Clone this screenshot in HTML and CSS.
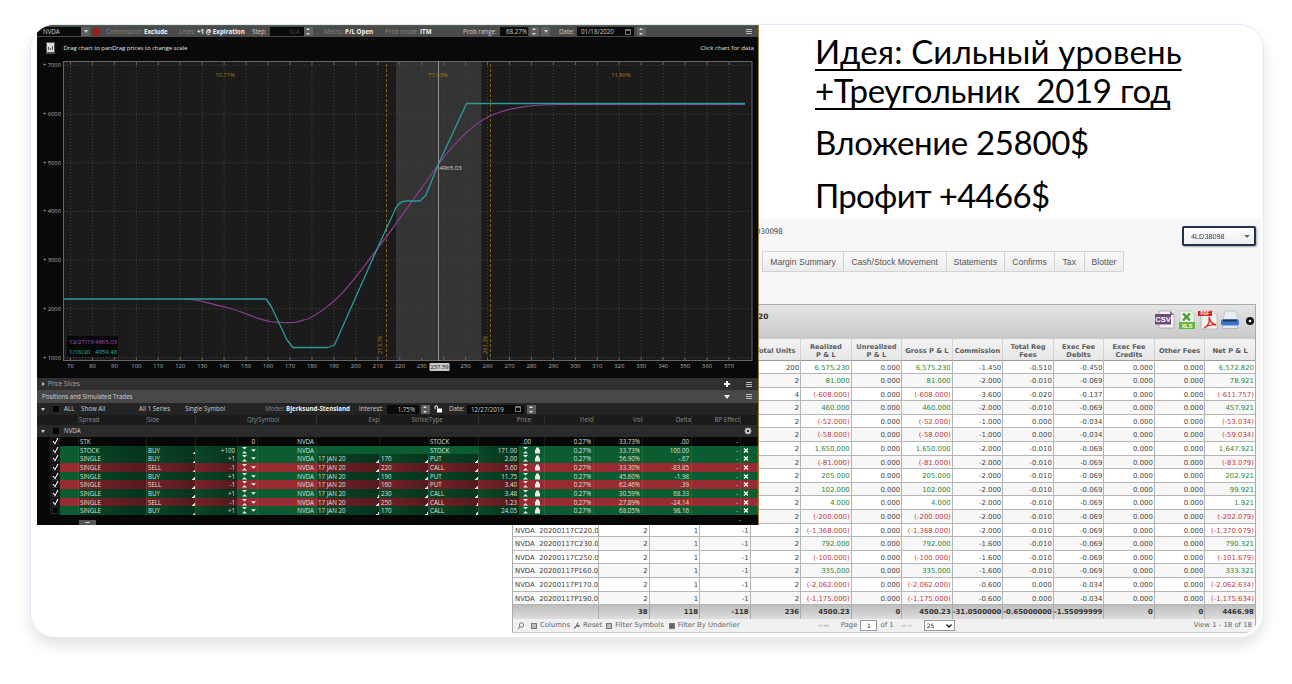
FILE: index.html
```html
<!DOCTYPE html>
<html lang="ru">
<head>
<meta charset="utf-8">
<title>NVDA 2019</title>
<link rel="stylesheet" href="styles.css">
</head>
<body>
<main class="card">
  <header class="idea">
    <p class="idea-line under first">Идея: Сильный уровень</p>
    <p class="idea-line under second">+Треугольник&nbsp; 2019 год</p>
    <p class="idea-line invest">Вложение 25800$</p>
    <p class="idea-line profit">Профит +4466$</p>
  </header>

  <section class="broker">
    <div class="account">
      <span class="account-id">030098</span>
      <span class="account-select"><span class="masked">4LD38098</span><i class="caret"></i></span>
    </div>
    <nav class="tabs">
      <span>Margin Summary</span><span>Cash/Stock Movement</span><span>Statements</span><span>Confirms</span><span>Tax</span><span>Blotter</span>
    </nav>
    <div class="report">
      <div class="report-title">
        <b>20</b>
        <svg class="exports" width="104" height="24" viewBox="0 0 104 24">
          <path d="M5 2h11l4 4v13H5z" fill="#f4f4f4" stroke="#999" stroke-width=".7"/>
          <path d="M16 2v4h4z" fill="#777"/>
          <rect x="1" y="5" width="16" height="10.500" fill="#6d4c7d"/>
          <text x="9" y="12.900" class="ico-text" font-size="7.500">CSV</text>
          <path d="M26 2h11l3 3v15H26z" fill="#eef3ea" stroke="#b9c4b4" stroke-width=".7"/>
          <path d="M29 4.500l7 7M36 4.500l-7 7" stroke="#4c9a35" stroke-width="2.400"/>
          <rect x="25" y="13" width="16" height="7" fill="#68b543"/>
          <text x="33" y="18.800" class="ico-text" font-size="5.500">XLS</text>
          <path d="M47 2h12l4 4v14H47z" fill="#f6f2f1" stroke="#aaa" stroke-width=".7"/>
          <rect x="44" y="2" width="14" height="5" fill="#cf2420"/>
          <text x="51" y="6" class="ico-text" font-size="4.500">PDF</text>
          <path d="M50 19c4-2 6-6 5-11 1 4 3 7 7 8-4-1-8 0-12 3" fill="none" stroke="#d32d27" stroke-width="1.400"/>
          <path d="M71 2h11l2 9H69z" fill="#e9eef4" stroke="#aab4c2" stroke-width=".7"/>
          <rect x="67" y="10.500" width="18" height="6" rx="2" fill="#3b74cb"/>
          <rect x="69" y="10.500" width="14" height="2" fill="#173866"/>
          <path d="M69 16.500h14l1 3H68z" fill="#dfe8f4" stroke="#8ba2c4" stroke-width=".6"/>
          <circle cx="96" cy="12" r="4" fill="#161616"/><circle cx="96" cy="12" r="1.300" fill="#fff"/>
        </svg>
      </div>
      <div class="grid head" id="head"></div>
      <div id="rows"></div>
      <div class="grid total" id="total"></div>
      <div class="pager">
        <svg width="8" height="8" viewBox="0 0 8 8"><circle cx="4.500" cy="3" r="2.200" fill="none" stroke="#666" stroke-width=".8"/><path d="M3 4.600L1 7" stroke="#666"/></svg>
        <span class="tool columns"><i class="sheet"></i>Columns</span>
        <span class="tool reset"><svg width="6" height="7" viewBox="0 0 6 7"><path d="M0 6.500L3 3.500M2.500 2.500l2 2 1.200-1.500M3 2.500L4 .8" stroke="#666" fill="none" stroke-width="1.200"/></svg>Reset</span>
        <span class="tool symbols"><i class="sheet"></i>Filter Symbols</span>
        <span class="tool underlier"><i class="sheet dark"></i>Filter By Underlier</span>
        <span class="nav first">ı◂ ◂◂</span><span class="page">Page</span><span class="box">1</span><span class="of">of 1</span><span class="nav">▸▸ ▸ı</span>
        <span class="box size">25<svg width="6" height="4" viewBox="0 0 6 4"><path d="M.5 .5L3 3 5.500 .5" fill="none" stroke="#111" stroke-width="1.300"/></svg></span>
        <span class="view">View 1 - 18 of 18</span>
      </div>
    </div>
  </section>

  <section class="platform">
    <div class="toolbar">
      <span class="field">NVDA</span><span class="btn"><i class="down"></i></span><span class="red"></span>
      <span class="dim c">Commission:</span><b>Exclude</b><span class="dim">Lines:</span><b>+1 @ Expiration</b><span>Step:</span>
      <span class="field na">N/A</span><span class="btn spin"></span><span class="dim m">Metric:</span><b>P/L Open</b><span class="dim">Prob mode:</span><b>ITM</b>
      <span>Prob range:</span><span class="field pct">68.27%</span><span class="btn spin"></span><span class="btn"><i class="down"></i></span>
      <span class="d">Date:</span><span class="field date">01/18/2020 <i class="cal"></i></span><span class="btn spin"></span><span class="list"></span>
    </div>
    <svg class="chart" width="722" height="340" viewBox="37 37 722 340" id="chart"></svg>
    <div class="bar slices"><span><i class="right"></i>Price Slices</span><span class="bar-tools"><b class="plus"></b><i class="list"></i></span></div>
    <div class="bar positions"><span>Positions and Simulated Trades</span><span class="bar-tools"><i class="down big"></i><i class="list"></i></span></div>
    <div class="filters">
      <i class="down"></i><i class="check"></i><span>ALL</span><span>Show All</span><span>All 1 Series</span><span>Single Symbol</span>
      <span class="dim">Model:</span><b>Bjerksund-Stensland</b><span>Interest:</span><span class="field pct">1.75%</span><span class="btn spin"></span>
      <svg width="9" height="8" viewBox="0 0 9 8"><path d="M1 4V2a1.300 1.300 0 0 1 2.600 0v1.500" fill="none" stroke="#fff"/><rect x="3" y="3.500" width="5" height="4" fill="#fff"/></svg>
      <span>Date:</span><span class="field date">12/27/2019 <i class="cal"></i></span><span class="btn spin"></span>
    </div>
    <div class="legs-head"><span></span><span>Spread</span><span>Side</span><span class="r">Qty</span><span>Symbol</span><span class="r">Exp</span><span class="r">Strike</span><span>Type</span><span class="r">Price</span><span></span><span class="r">Yield</span><span class="r">Vol</span><span class="r">Delta</span><span class="r">BP Effect</span><span></span></div>
    <div class="group"><i class="down"></i><i class="check"></i><span>NVDA</span>
      <svg width="8" height="8" viewBox="0 0 8 8"><circle cx="4" cy="4" r="2" fill="none" stroke="#ddd" stroke-width="1.400"/><path d="M4 .5v1.200M4 6.300v1.200M.5 4h1.200M6.300 4h1.200M1.500 1.500l.9.900M5.600 5.600l.9.900M6.500 1.500l-.9.900M2.400 5.600l-.9.900" stroke="#ddd" stroke-width="1.100"/></svg>
    </div>
    <div id="legs"></div>
    <div class="tail"><span class="grip"></span><span class="dash">-</span></div>
  </section>
</main>
<script src="app.js"></script>
</body>
</html>
```

FILE: styles.css
```css
* { box-sizing: border-box; }
body { margin: 0; height: 684px; padding: 25px 31px 0; background: #fff; overflow: hidden; }
p { margin: 0; }
.card { position: relative; width: 1230px; height: 610px; border-radius: 24px; overflow: hidden; background: #fff; }
body::before { content: ""; position: absolute; left: 30px; top: 24px; width: 1232px; height: 612px; border-radius: 25px; border: 1px solid #dfeaf6; box-shadow: 0 8px 14px rgba(0,0,0,.11); }

.idea { height: 193px; padding: 6px 0 0 784px; font-family: Lato, "Open Sans", sans-serif; font-size: 33px; color: #000; }
.idea-line { height: 39px; line-height: 40px; white-space: nowrap; }
.under { width: max-content; text-decoration: underline; text-decoration-thickness: 2px; text-underline-offset: 5px; text-decoration-skip-ink: none; }
.first { letter-spacing: .15px; }
.second { letter-spacing: -.28px; }
.invest { margin-top: 13px; letter-spacing: -.35px; }
.profit { margin-top: 14px; letter-spacing: -.7px; }

.broker { margin-left: 475px; height: 417px; padding: 7px 5px 0 6px; background: linear-gradient(90deg, #fff 6px, #f7f7f7 6px); }
.account { display: flex; justify-content: space-between; height: 26px; padding-left: 244px; }
.account-id { font: 7.800px/14px "DejaVu Sans Condensed", "DejaVu Sans", sans-serif; color: #1b3a5c; }
.account-select { display: flex; align-items: center; justify-content: space-between; width: 74px; height: 20px; margin-top: 1px; padding: 0 4px 0 7px; border: 2px solid #22324a; border-radius: 2px; background: linear-gradient(#fff, #eee); box-shadow: 1px 1px 2px #aaa; font: 7.300px "Liberation Sans", sans-serif; color: #344252; }
.masked { filter: blur(.7px); }
.caret { border: 3px solid transparent; border-top-color: #667; border-bottom: 0; }
.tabs { display: grid; grid-template-columns: 81px 102.500px 58.500px 50px 29.500px 40px; width: 362px; height: 21px; margin-left: 250px; border: 1px solid #d2d2d2; border-left: 0; border-radius: 0 2px 2px 0; background: linear-gradient(#fafafa, #ececec); font: 8.600px/20px "Liberation Sans", sans-serif; color: #555; text-align: center; }
.tabs span { border-left: 1px solid #d2d2d2; white-space: nowrap; }
.report { width: 744px; margin-top: 32px; border: 1px solid #aaa; border-bottom-color: #ccc; font: 6.900px/15px "DejaVu Sans", Verdana, sans-serif; color: #444; }
.report-title { display: flex; justify-content: space-between; height: 33.500px; padding: 4px 0 0 245px; background: linear-gradient(#e4e4e4, #c9c9c9); }
.report-title b { font-size: 7.500px; line-height: 16px; color: #333; }
.exports { margin-right: -3px; }
.ico-text { font-family: "Liberation Sans", sans-serif; font-weight: bold; fill: #fff; text-anchor: middle; }
.grid { display: grid; grid-template-columns: 86px repeat(13, 50.540px); height: 13.600px; overflow: hidden; }
.grid span { border-right: 1px solid #b5b5b5; border-bottom: 1px solid #b5b5b5; text-align: right; padding-right: 1px; white-space: pre; overflow: hidden; }
.grid:nth-child(even) { background: #f7f7f7; }
.grid:nth-child(odd) { background: #fff; }
.grid span:first-child { text-align: left; padding-left: 2px; }
.grid.head { height: 22px; background: linear-gradient(#f3f3f3, #e6e6e6); font-weight: bold; font-size: 6.700px; line-height: 8px; color: #5c5c5c; }
.grid.head span { display: flex; align-items: center; justify-content: center; padding: 4px 0 0; text-align: center; white-space: pre; border-right-color: #d2d2d2; border-bottom-color: #999; }
.grid.total { height: 14px; background: linear-gradient(#bdbdbd, #dedede); font-weight: bold; color: #333; }
.grid.total span { border-color: #aaa; overflow: visible; }
.grid .pos { color: #2b8a35; }
.grid .neg { color: #c23a42; }
.pager { display: flex; align-items: center; height: 13px; padding: 0 3px 0 4px; background: #f0f0f0; color: #666; white-space: nowrap; }
.tool { display: flex; align-items: center; gap: 3px; margin-left: 5px; }
.columns { margin-left: 6px; }
.reset { margin-left: 4px; }
.symbols { margin-left: 4px; }
.sheet { width: 6px; height: 6px; border: 1px solid #777; background: #bbb; }
.sheet.dark { background: #666; }
.nav { color: #bbb; font-size: 5px; width: 22px; margin-left: 8px; }
.nav.first { margin-left: 78px; width: 23px; letter-spacing: 0; }
.box { margin: 0 3px 0 3px; width: 17px; height: 11px; line-height: 10px; text-align: center; font-size: 6px; color: #222; background: #fff; border: 1px solid #999; }
.box.size { display: flex; justify-content: space-between; align-items: center; width: 31px; margin-left: 0; padding: 0 2px; }
.view { margin-left: auto; }

.platform { position: absolute; left: 6px; top: 0; width: 722px; height: 500px; background: #070707; border-right: 1px solid #a07a3a; font: 6.200px/12px "Open Sans", "Noto Sans", sans-serif; color: #cfcfcf; white-space: nowrap; overflow: hidden; }
.platform b { color: #f2f2f2; }
.dim { color: #858585; }
.toolbar { display: flex; align-items: center; height: 12px; background: #4a4a4a; border-top: 1px solid #53614c; line-height: 11px; }
.toolbar > * { flex: none; }
.field { height: 9px; line-height: 9px; background: #0a0a0a; }
.toolbar .field:first-child { width: 44px; padding-left: 6px; }
.btn { display: flex; align-items: center; justify-content: center; width: 9px; height: 9px; background: #606060; }
.spin { position: relative; }
.spin::before, .spin::after { content: ""; position: absolute; left: 2px; border: 2.500px solid transparent; }
.spin::before { top: 1px; border-top: 0; border-bottom: 2.500px solid #ddd; }
.spin::after { bottom: 1px; border-bottom: 0; border-top: 2.500px solid #ddd; }
.down { display: block; width: 0; height: 0; border: 2.500px solid transparent; border-top: 3px solid #ccc; border-bottom: 0; }
.down.big { border-width: 4px 3px 0; border-top-color: #eee; }
.right { display: inline-block; margin-right: 3px; border: 2.500px solid transparent; border-left: 3px solid #bbb; border-right: 0; }
.red { width: 6px; height: 8px; margin-left: 3px; background: #9c1c1c; }
.toolbar .c { width: 38px; margin-left: 7px; }
.toolbar b:nth-of-type(1) { width: 35px; }
.toolbar b:nth-of-type(1) + .dim { width: 18px; }
.toolbar b:nth-of-type(2) { width: 55px; }
.toolbar b:nth-of-type(2) + span { width: 18px; }
.na { width: 34px; padding-right: 4px; text-align: right; color: #444; }
.toolbar .m { width: 21px; margin-left: 11px; }
.toolbar b:nth-of-type(3) { width: 40px; }
.toolbar b:nth-of-type(3) + .dim { width: 35px; }
.toolbar b:nth-of-type(4) { width: 43px; }
.toolbar b:nth-of-type(4) + span { width: 37px; }
.toolbar .pct { width: 28px; margin-right: 2px; padding-left: 6px; }
.toolbar .btn + .btn { margin-left: 2px; }
.toolbar .d { width: 18px; margin-left: 9px; }
.date { width: 57px; padding: 0 3px 0 4px; display: flex; justify-content: space-between; align-items: center; margin-right: 3px; }
.cal { width: 6px; height: 6px; border: 1px solid #777; border-top-width: 2px; }
.list { display: block; width: 6px; height: 5px; background: repeating-linear-gradient(#bbb 0 1px, transparent 1px 2px); }
.toolbar .list { margin-left: auto; margin-right: 6px; }
.chart { display: block; }
.chart text { font: 5.800px "Open Sans", sans-serif; fill: #b0b0b0; }
.chart .hint { font-size: 6.150px; fill: #e0e0e0; }
.chart .prob { fill: #b27c1e; }
.bar { display: flex; align-items: center; justify-content: space-between; height: 12px; margin-top: 1px; padding: 0 6px 0 5px; background: #303030; color: #aaa; }
.bar.positions { margin-top: 0; height: 13px; background: #484848; color: #d0d0d0; }
.bar-tools { display: flex; align-items: center; gap: 16px; }
.bar-tools .down.big { width: 6px; }
.plus { width: 6px; height: 6px; background: linear-gradient(#fff, #fff) 50% 50% / 6px 2px no-repeat, linear-gradient(#fff, #fff) 50% 50% / 2px 6px no-repeat; }
.filters { display: grid; grid-template-columns: 12px 11px 17px 58px 46px 80px 21px 73px 28px 34px 12px 16px 18px 60px 9px; align-items: center; height: 12px; padding-left: 4px; background: #242424; }
.filters svg { margin-left: 1px; }
.filters .pct { text-align: right; padding-right: 4px; margin-right: 2px; }
.filters .date { width: 57px; }
.check { display: block; width: 6px; height: 6px; background: #050505; }
.leg { display: grid; grid-template-columns: 14px 9px 19px 68px 49px 42px 20px 59px 63px 49px 50px 41px 25px 49px 49px 49px 49px 17px; }
.legs-head { display: grid; grid-template-columns: 42px 68px 49px 62px 59px 63px 49px 50px 53px 13px 49px 49px 49px 49px 17px; height: 10px; line-height: 10px; background: #1b1b1b; color: #8b8b8b; }
.legs-head span { border-right: 1px solid #303030; }
.legs-head .r { text-align: right; }
.group { display: grid; grid-template-columns: 12px 11px 680px 10px; align-items: center; height: 12px; padding-left: 4px; background: #2a2a2a; }
.leg { height: 8.670px; line-height: 9px; color: #d8e0da; --b: #0b5c30; --d: linear-gradient(90deg, #084727, #05331c); }
.leg.sell { --b: #982c32; --d: linear-gradient(90deg, #792228, #531a1e); }
.leg.flat { --b: #070707; --d: #070707; }
.leg span { background: var(--b); border-right: 1px solid rgba(255,255,255,.08); padding: 0 2px 0 1px; overflow: hidden; }
.leg .d { background: var(--d); }
.leg .k { background: #070707; padding: 0; }
.leg .r { text-align: right; }
.leg .end { padding: 0; }
.leg .corner { background: linear-gradient(135deg, transparent 50%, #ddd 50%) 100% 100% / 3px 3px no-repeat, var(--d); }
.leg svg { display: block; }
.leg .zero { grid-column: span 2; padding-right: 13px; }
.leg.wide .w { background: var(--b); border-right-color: transparent; }
.tail { display: flex; justify-content: space-between; padding: 5px 17px 0 42px; height: 10px; line-height: 0; }
.grip { width: 17px; height: 5px; background: #ccc; border: 2px solid #555; border-width: 2px 6px; }
```

FILE: app.js
```js
const cells = (list, cls) => list.map((v, i) => `<span class="${cls ? cls(v, i) : ''}">${v}</span>`).join('');

document.getElementById('head').innerHTML = cells(['', '', '', '', 'Total Units', 'Realized\nP & L', 'Unrealized\nP & L', 'Gross P & L', 'Commission', 'Total Reg\nFees', 'Exec Fee\nDebits', 'Exec Fee\nCredits', 'Other Fees', 'Net P & L'].map(t => t.replace('&', '&amp;')));

// symbol | units | realized | commission | reg fees | exec debits | net
const trades = [
  '|200|6,575.230|-1.450|-0.510|-0.450|6,572.820', '|2|81.000|-2.000|-0.010|-0.069|78.921',
  '|4|(-608.000)|-3.600|-0.020|-0.137|(-611.757)', '|2|460.000|-2.000|-0.010|-0.069|457.921',
  '|2|(-52.000)|-1.000|0.000|-0.034|(-53.034)', '|2|(-58.000)|-1.000|0.000|-0.034|(-59.034)',
  '|2|1,650.000|-2.000|-0.010|-0.069|1,647.921', '|2|(-81.000)|-2.000|-0.010|-0.069|(-83.079)',
  '|2|205.000|-2.000|-0.010|-0.069|202.921', '|2|102.000|-2.000|-0.010|-0.069|99.921',
  '|2|4.000|-2.000|-0.010|-0.069|1.921', '|2|(-200.000)|-2.000|-0.010|-0.069|(-202.079)',
  'C220.0|2|(-1,368.000)|-2.000|-0.010|-0.069|(-1,370.079)', 'C230.0|2|792.000|-1.600|-0.010|-0.069|790.321',
  'C250.0|2|(-100.000)|-1.600|-0.010|-0.069|(-101.679)', 'P160.0|2|335.000|-1.600|-0.010|-0.069|333.321',
  'P170.0|2|(-2,062.000)|-0.600|0.000|-0.034|(-2,062.634)', 'P190.0|2|(-1,175.000)|-0.600|0.000|-0.034|(-1,175.634)'
];
document.getElementById('rows').innerHTML = trades.map(t => {
  const [s, u, r, c, f, d, n] = t.split('|');
  const row = [s && 'NVDA  20200117' + s, s && '2', s && '1', s && '-1', u, r, '0.000', r, c, f, d, '0.000', '0.000', n];
  return `<div class="grid">${cells(row, (v, i) => [5, 7, 13].includes(i) ? (v[0] === '(' ? 'neg' : 'pos') : '')}</div>`;
}).join('');
document.getElementById('total').innerHTML = cells(['', '38', '118', '-118', '236', '4500.23', '0', '4500.23', '-31.0500000', '-0.65000000', '-1.55099999', '0', '0', '4466.98']);

// Risk profile chart
let g = '<rect x="37" y="37" width="722" height="340" fill="#090909"/><rect x="63.5" y="61" width="688.5" height="299.500" fill="#1b1b1b"/><rect x="396" y="61" width="85.500" height="299.500" fill="#343434"/>';
for (let p = 70; p <= 370; p += 10) {
  const x = 70.5 + (p - 70) * 2.195;
  g += `<path d="M${x} 61V360" stroke="#424242" stroke-dasharray="1 2"/><path d="M${x} 61v4M${x} 357v4" stroke="#666"/>`;
  if (p !== 240) g += `<text x="${x}" y="368" text-anchor="middle">${p}</text>`;
}
for (let k = 1; k <= 7; k++) {
  const y = 357.5 - (k - 1) * 48.7;
  g += `<path d="M64 ${y}H752" stroke="#424242" stroke-dasharray="1 2"/><text x="61" y="${y + 2}" text-anchor="end">+ ${k}000</text>`;
}
g += `<rect x="63.500" y="61.500" width="688.500" height="299" fill="none" stroke="#666"/>
<path d="M386.500 64V360M490.500 64V360" stroke="#84601e" stroke-dasharray="3 2"/>
<path d="M438.500 61V361" stroke="#929292"/>
<text class="prob" x="225" y="77" text-anchor="middle">10.71%</text><text class="prob" x="438" y="77" text-anchor="middle">77.43%</text><text class="prob" x="621" y="77" text-anchor="middle">11.86%</text>
<text class="prob" transform="translate(382 354) rotate(-90)">213.76</text><text class="prob" transform="translate(486.500 354) rotate(-90)">261.26</text>
<path d="M185 299C200 299 208 304 225 307C243 311 255 319 270 321.500C277 322.700 287 322.600 293 322.500C299 322.500 301 320 308 319C340 303 357 275 378 248C400 219 420 190 438 165C455 142 471 125 490 116C510 107 530 105 560 104.500H745" fill="none" stroke="#8c3f91" stroke-width="1.200"/>
<path d="M64 299H266L271 306L287 340L293 347.500H328L334.500 345L378 247L394 212Q398 201 406 201H420L426 195L438 165L466.500 103.500H745" fill="none" stroke="#2c9c9b" stroke-width="1.300" stroke-linejoin="round"/>
<rect x="67" y="336" width="51" height="21" rx="1" fill="#080808"/>
<text x="69" y="344" style="fill:#b44fb8;font-size:6px">12/27/19</text><text x="95" y="344" style="fill:#b44fb8;font-size:6px">4965.03</text><text x="69" y="354" style="fill:#32b3ad;font-size:6px">1/18/20</text><text x="95" y="354" style="fill:#32b3ad;font-size:6px">4959.48</text>
<text x="439.500" y="170" style="fill:#ddd;font-size:6px">4965.03</text>
<rect x="429.500" y="363" width="20" height="8" rx="1" fill="#c8c8c8"/><text x="439.500" y="369.300" text-anchor="middle" style="fill:#111">237.59</text>
<rect x="46" y="42" width="9" height="12" fill="#555"/><rect x="47" y="43" width="7" height="9" fill="#ddd"/><path d="M48.500 50v-3M50.500 50v-2M52.500 50v-4" stroke="#555"/>
<text class="hint" x="63.500" y="49.500" textLength="124">Drag chart to panDrag prices to change scale</text><text class="hint" x="754" y="49.500" text-anchor="end">Click chart for data</text>`;
document.getElementById('chart').innerHTML = g;

// checked | spread | side | qty | exp | strike | type | price | vol | delta
const legs = [
  '1|STK||0|||STOCK|.00|33.73%|.00', '1|STOCK|BUY|+100|||STOCK|171.00|33.73%|100.00',
  '1|SINGLE|BUY|+1|17 JAN 20|170|PUT|2.00|56.90%|-.67', '1|SINGLE|SELL|-1|17 JAN 20|220|CALL|5.60|33.30%|-83.85',
  '1|SINGLE|BUY|+1|17 JAN 20|190|PUT|11.75|45.60%|-1.98', '1|SINGLE|SELL|-1|17 JAN 20|160|PUT|3.40|62.46%|.39',
  '1|SINGLE|BUY|+1|17 JAN 20|230|CALL|3.48|30.59%|68.33', '1|SINGLE|SELL|-1|17 JAN 20|250|CALL|1.23|27.89%|-24.14',
  '0|SINGLE|BUY|+1|17 JAN 20|170|CALL|24.05|68.05%|98.16'
];
const step = 'M3 1h5L5.500 3.500zM3 7.500h5L5.500 5z';
document.getElementById('legs').innerHTML = legs.map((l, i) => {
  const [on, spread, side, qty, exp, strike, type, price, vol, delta] = l.split('|');
  const flat = i === 0, cn = flat ? 'd' : 'd corner';
  const kind = flat ? 'flat' : side === 'SELL' ? 'sell' : i === 1 ? 'wide' : '';
  const svg = (w, d) => `<svg width="${w}" height="8.500" viewBox="0 0 ${w} 8.500"><path d="${d}" fill="#e8e8e8"/></svg>`;
  return `<div class="leg ${kind}"><span class="k"></span>
<span class="k"><svg width="9" height="8.500" viewBox="0 0 9 8.500"><rect x="1" y="1" width="6" height="6.500" fill="#000" stroke="#555" stroke-width=".5"/>${on === '1' ? '<path d="M2 4l2 2.500L7 1" fill="none" stroke="#fff" stroke-width="1.100"/>' : ''}</svg></span>
<span></span><span class="${flat ? 'd' : 'd'}">${spread}</span><span class="${cn}">${side}</span><span class="d r">${flat ? '' : qty}</span>
<span class="${flat ? 'r' : ''}">${flat ? '0' : svg(18, step + 'M12 3.300h5L14.500 5.800z')}</span><span class="r">NVDA</span>
<span class="${i > 1 ? cn : 'd'} w">${exp}</span><span class="${i > 1 ? cn : 'd'} w">${strike}</span><span class="${i > 1 ? cn : 'd'} w">${type}</span>
<span class="d r ${flat ? 'zero' : ''}">${price}</span>${flat ? '' : `<span class="end">${svg(24, step + 'M15 3.500h1v-2h3v2h1v4h-5z')}</span>`}
<span class="r">0.27%</span><span class="r">${vol}</span><span class="r">${delta}</span><span class="r">-</span>
<span class="end">${flat ? '' : '<svg width="9" height="8.500" viewBox="0 0 9 8.500"><path d="M3 2.500l4 4M7 2.500l-4 4" stroke="#fff" stroke-width="1.200"/></svg>'}</span></div>`;
}).join('');
```
